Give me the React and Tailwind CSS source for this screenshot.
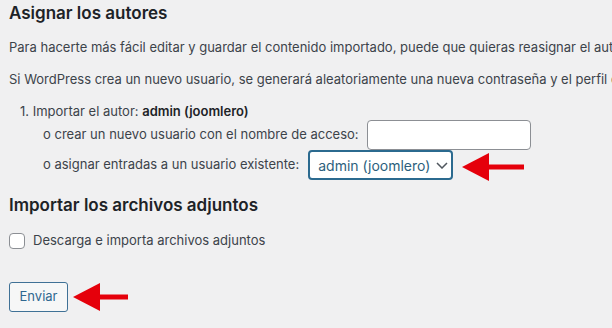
export default function App() {
  return (
    <div
      className="w-[612px] h-[328px] overflow-hidden bg-[#f0f0f1] text-[13px] text-[#3c434a] pl-[9px]"
      style={{ fontFamily: "Inter, 'Liberation Sans', sans-serif" }}
    >
      {/* Autores */}
      <h2 className="mt-[2px] text-[17px] leading-[22px] font-semibold text-[#1d2327] whitespace-nowrap">
        Asignar los autores
      </h2>
      <p className="mt-[14px] leading-[18px] whitespace-nowrap">
        Para hacerte más fácil editar y guardar el contenido importado, puede que quieras reasignar el autor del contenido importado a un usuario existente en este sitio.
      </p>
      <p className="mt-[14px] leading-[18px] whitespace-nowrap">
        Si WordPress crea un nuevo usuario, se generará aleatoriamente una nueva contraseña y el perfil de usuario del nuevo usuario.
      </p>

      <div className="mt-[14px] pl-[11px] leading-[18px] whitespace-nowrap">
        1. Importar el autor: <strong className="font-semibold text-[#1d2327]">admin (joomlero)</strong>
      </div>
      <div className="pl-[34px] whitespace-nowrap">
        <div className="flex items-center h-[30px]">
          <span>o crear un nuevo usuario con el nombre de acceso:</span>
          <div className="ml-[8px] w-[164px] h-[30px] bg-white border border-[#8c8f94] rounded-[4px]" />
        </div>
        <div className="flex items-center h-[30px]">
          <span>o asignar entradas a un usuario existente:</span>
          <div className="ml-[9px] w-[145px] h-[30px] flex items-center pl-[8px] bg-white border-2 border-[#2b6a8f] rounded-[4px] text-[14px] text-[#2c5f7d]">
            <span>admin (joomlero)</span>
            <svg className="ml-[6px]" width="12" height="7" viewBox="0 0 12 7" fill="none">
              <path d="M1 1l5 5 5-5" stroke="#50575e" strokeWidth="1.5" />
            </svg>
          </div>
          <svg className="ml-[9px] mt-[3px]" width="62" height="28" viewBox="0 0 62 28">
            <polygon points="0,14 27,0 27,28" fill="#e5000b" />
            <rect x="25" y="11.5" width="37" height="5" fill="#e5000b" />
          </svg>
        </div>
      </div>

      {/* Adjuntos */}
      <h2 className="mt-[14px] text-[17px] leading-[22px] font-semibold text-[#1d2327] whitespace-nowrap">
        Importar los archivos adjuntos
      </h2>
      <label className="mt-[17px] flex items-center h-[16px] whitespace-nowrap">
        <span className="w-[16px] h-[16px] bg-white border border-[#8c8f94] rounded-[4px]" />
        <span className="ml-[8px]">Descarga e importa archivos adjuntos</span>
      </label>

      <div className="mt-[33px] flex items-center">
        <button className="w-[59px] h-[30px] bg-[#f6f7f7] border border-[#3f7196] rounded-[3px] text-[13px] text-[#2f6890]">
          Enviar
        </button>
        <svg className="ml-[5px]" width="55" height="28" viewBox="0 0 55 28">
          <polygon points="0,14 27,0 27,28" fill="#e5000b" />
          <rect x="25" y="11.5" width="30" height="5" fill="#e5000b" />
        </svg>
      </div>
    </div>
  );
}
